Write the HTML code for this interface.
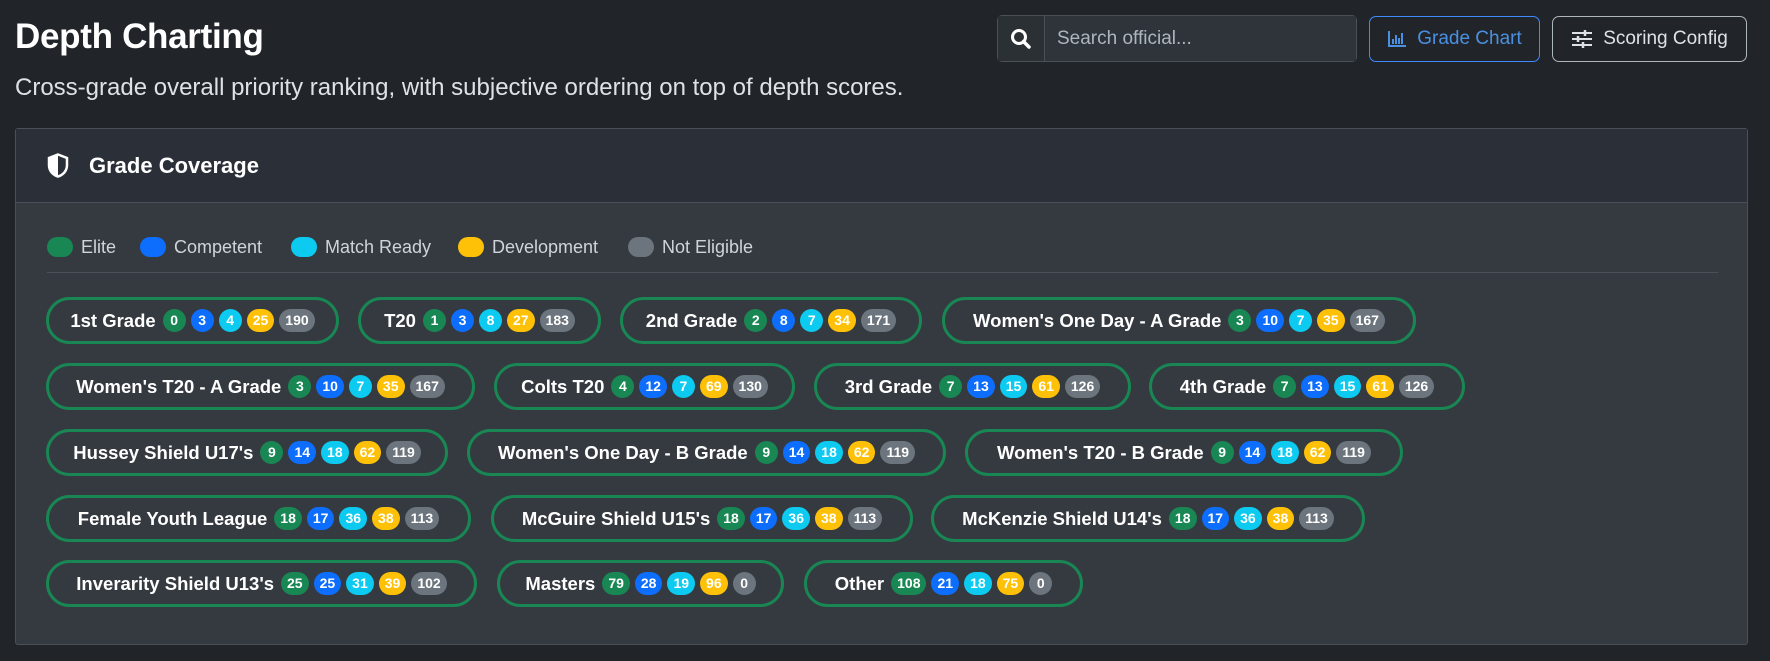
<!DOCTYPE html>
<html><head><meta charset="utf-8"><style>
*{box-sizing:border-box;margin:0;padding:0}
body{width:1770px;height:661px;background:#212529;color:#dee2e6;font-family:"Liberation Sans",sans-serif;position:relative;overflow:hidden}
h1{position:absolute;left:15px;top:17px;font-size:35px;font-weight:600;color:#fff;letter-spacing:-0.3px}
.sub{position:absolute;left:15px;top:74px;font-size:24px;color:#dee2e6}
.search{position:absolute;left:997px;top:15px;width:360px;height:47px;border:1px solid #495057;border-radius:5px;display:flex;background:#2b3035}
.search .ic{width:47px;border-right:1px solid #495057;display:flex;align-items:center;justify-content:center;background:#2b3035}
.search .in{flex:1;display:flex;align-items:center;padding-left:12px;font-size:19px;color:#adb5bd;background:#2f343b}
.btn{position:absolute;top:16px;height:46px;border-radius:7px;display:flex;align-items:center;justify-content:center;font-size:19px;gap:10px}
.b1{left:1369px;width:171px;border:1px solid #3d8bfd;color:#4a90e2}
.b2{left:1552px;width:195px;border:1px solid #adb5bd;color:#dee2e6}
.card{position:absolute;left:15px;top:128px;width:1733px;height:517px;border:1px solid #495057;background:#343a40;border-radius:3px}
.ch{height:74px;background:#2b3038;border-bottom:1px solid #495057;display:flex;align-items:center;padding-left:31px}
.ch span{font-size:22px;font-weight:700;color:#fff;margin-left:20px}
.leg{position:absolute;top:108px;left:31px;height:20px;font-size:18px;color:#ced4da}
.leg div{position:absolute;top:0;display:flex;align-items:center;white-space:nowrap;height:20px}
.leg i{display:inline-block;width:26px;height:20px;border-radius:10px;margin-right:8px}
.hr{position:absolute;left:31px;top:143px;width:1671px;height:1px;background:#4a5058}
.pill{position:absolute;height:47px;border:3px solid #198754;border-radius:24px;display:flex;align-items:center;justify-content:center;font-size:18.5px;font-weight:700;color:#fff;white-space:nowrap}
.pill b{display:inline-block;height:23px;min-width:23px;padding:0 6px;border-radius:12px;font-size:14px;line-height:23px;text-align:center;margin-left:5px;color:#fff}
.pill b:first-of-type{margin-left:7px}
.g{background:#198754}.bl{background:#0d6efd}.c{background:#0dcaf0}.y{background:#ffc107}.s{background:#6c757d}
</style></head><body>
<h1>Depth Charting</h1>
<div class="sub">Cross-grade overall priority ranking, with subjective ordering on top of depth scores.</div>
<div class="search"><div class="ic"><svg width="22" height="22" viewBox="0 0 22 22"><circle cx="9" cy="9" r="6.5" fill="none" stroke="#fff" stroke-width="3"/><path d="M13.5 13.5L19 19" stroke="#fff" stroke-width="3.5" stroke-linecap="round"/></svg></div><div class="in">Search official...</div></div>
<div class="btn b1"><svg width="20" height="18" viewBox="0 0 20 18"><path d="M2 1v15h17" fill="none" stroke="#4a90e2" stroke-width="2"/><path d="M6 9v5M9 5v9M12 8v6M15 3v11" stroke="#4a90e2" stroke-width="2"/></svg>Grade Chart</div>
<div class="btn b2"><svg width="22" height="20" viewBox="0 0 22 20"><path d="M1 4h20M1 10h20M1 16h20" stroke="#dee2e6" stroke-width="2"/><path d="M14 1v6M7 7v6M12 13v6" stroke="#dee2e6" stroke-width="2.5"/></svg>Scoring Config</div>
<div class="card">
<div class="ch"><svg width="22" height="25" viewBox="0 0 22 25"><path d="M11 1.5L20 5v7c0 6-4 10-9 11.5C6 22 2 18 2 12V5z" fill="none" stroke="#fff" stroke-width="2.5"/><path d="M11 1.5V23.5C6 22 2 18 2 12V5z" fill="#fff"/></svg><span>Grade Coverage</span></div>
<div class="leg">
<div style="left:0"><i class="g"></i>Elite</div>
<div style="left:93px"><i class="bl"></i>Competent</div>
<div style="left:244px"><i class="c"></i>Match Ready</div>
<div style="left:411px"><i class="y"></i>Development</div>
<div style="left:581px"><i class="s"></i>Not Eligible</div>
</div>
<div class="hr"></div>
</div>
<div class="pill" style="left:46px;top:297px;width:293px">1st Grade<b class="g">0</b><b class="bl">3</b><b class="c">4</b><b class="y">25</b><b class="s">190</b></div>
<div class="pill" style="left:358px;top:297px;width:243px">T20<b class="g">1</b><b class="bl">3</b><b class="c">8</b><b class="y">27</b><b class="s">183</b></div>
<div class="pill" style="left:620px;top:297px;width:302px">2nd Grade<b class="g">2</b><b class="bl">8</b><b class="c">7</b><b class="y">34</b><b class="s">171</b></div>
<div class="pill" style="left:942px;top:297px;width:474px">Women's One Day - A Grade<b class="g">3</b><b class="bl">10</b><b class="c">7</b><b class="y">35</b><b class="s">167</b></div>

<div class="pill" style="left:46px;top:363px;width:429px">Women's T20 - A Grade<b class="g">3</b><b class="bl">10</b><b class="c">7</b><b class="y">35</b><b class="s">167</b></div>
<div class="pill" style="left:494px;top:363px;width:301px">Colts T20<b class="g">4</b><b class="bl">12</b><b class="c">7</b><b class="y">69</b><b class="s">130</b></div>
<div class="pill" style="left:814px;top:363px;width:317px">3rd Grade<b class="g">7</b><b class="bl">13</b><b class="c">15</b><b class="y">61</b><b class="s">126</b></div>
<div class="pill" style="left:1149px;top:363px;width:316px">4th Grade<b class="g">7</b><b class="bl">13</b><b class="c">15</b><b class="y">61</b><b class="s">126</b></div>

<div class="pill" style="left:46px;top:429px;width:402px">Hussey Shield U17's<b class="g">9</b><b class="bl">14</b><b class="c">18</b><b class="y">62</b><b class="s">119</b></div>
<div class="pill" style="left:467px;top:429px;width:479px">Women's One Day - B Grade<b class="g">9</b><b class="bl">14</b><b class="c">18</b><b class="y">62</b><b class="s">119</b></div>
<div class="pill" style="left:965px;top:429px;width:438px">Women's T20 - B Grade<b class="g">9</b><b class="bl">14</b><b class="c">18</b><b class="y">62</b><b class="s">119</b></div>

<div class="pill" style="left:46px;top:495px;width:425px">Female Youth League<b class="g">18</b><b class="bl">17</b><b class="c">36</b><b class="y">38</b><b class="s">113</b></div>
<div class="pill" style="left:491px;top:495px;width:422px">McGuire Shield U15's<b class="g">18</b><b class="bl">17</b><b class="c">36</b><b class="y">38</b><b class="s">113</b></div>
<div class="pill" style="left:931px;top:495px;width:434px">McKenzie Shield U14's<b class="g">18</b><b class="bl">17</b><b class="c">36</b><b class="y">38</b><b class="s">113</b></div>

<div class="pill" style="left:46px;top:560px;width:431px">Inverarity Shield U13's<b class="g">25</b><b class="bl">25</b><b class="c">31</b><b class="y">39</b><b class="s">102</b></div>
<div class="pill" style="left:497px;top:560px;width:287px">Masters<b class="g">79</b><b class="bl">28</b><b class="c">19</b><b class="y">96</b><b class="s">0</b></div>
<div class="pill" style="left:804px;top:560px;width:279px">Other<b class="g">108</b><b class="bl">21</b><b class="c">18</b><b class="y">75</b><b class="s">0</b></div>
</body></html>
